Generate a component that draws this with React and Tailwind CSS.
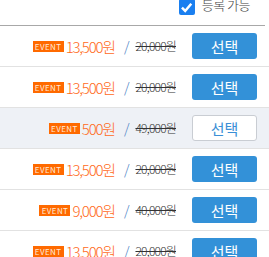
import React from 'react';

const rows = [
  { price: '13,500원', orig: '20,000원', selected: true },
  { price: '13,500원', orig: '20,000원', selected: true },
  { price: '500원', orig: '49,000원', selected: false },
  { price: '13,500원', orig: '20,000원', selected: true },
  { price: '9,000원', orig: '40,000원', selected: true },
  { price: '13,500원', orig: '20,000원', selected: true },
];

function CheckIcon() {
  return (
    <span className="w-[16px] h-[16px] bg-[#1a7ff0] rounded-[2px] flex items-center justify-center">
      <svg width="13" height="13" viewBox="0 0 12 12">
        <path d="M1.8 6.2 L4.8 9.2 L10.4 2.6" stroke="#fff" strokeWidth="2.3" fill="none" />
      </svg>
    </span>
  );
}

export default function App() {
  return (
    <div
      className="w-[269px] h-[257px] overflow-hidden bg-white"
      style={{ fontFamily: '"Noto Sans CJK KR", "Noto Sans", sans-serif' }}
    >
      {/* 상단 체크 */}
      <div className="h-[26px] border-b border-[#a8a8a8] mr-[4px] flex justify-end items-start pr-[15px]">
        <div className="flex items-center gap-[7px] -mt-[1px]">
          <CheckIcon />
          <span className="text-[13px] leading-[16px] font-light tracking-[-0.5px] text-[#444] -mt-[5px]">등록 가능</span>
        </div>
      </div>

      {rows.map((r, i) => (
        <div
          key={i}
          className={`h-[41px] border-b border-[#e2e2e2] flex items-center justify-end pr-[12px] ${
            r.selected ? 'bg-white' : 'bg-[#eef1f6]'
          }`}
        >
          <span className="bg-[#ff6a00] text-[#ffe9d9] text-[8px] leading-[11px] h-[11px] w-[31px] flex items-center justify-center tracking-[0.4px] mr-[2px]">
            EVENT
          </span>
          <span className="text-[15px] font-light text-[#ff6a1a] tracking-[-1.2px] leading-none">{r.price}</span>
          <span className="text-[14px] font-light text-[#4a80c4] ml-[9px] mr-[6px] leading-none">/</span>
          <span className="text-[12px] font-light text-[#333] line-through tracking-[-0.8px] leading-none">{r.orig}</span>
          {r.selected ? (
            <button className="ml-[16px] w-[65px] h-[26px] rounded-[3px] bg-[#3391d8] text-white text-[15px] leading-none">
              선택
            </button>
          ) : (
            <button className="ml-[16px] w-[65px] h-[26px] rounded-[3px] bg-white border border-[#c9cdd3] text-[#3a8fd6] text-[15px] leading-none">
              선택
            </button>
          )}
        </div>
      ))}
    </div>
  );
}
